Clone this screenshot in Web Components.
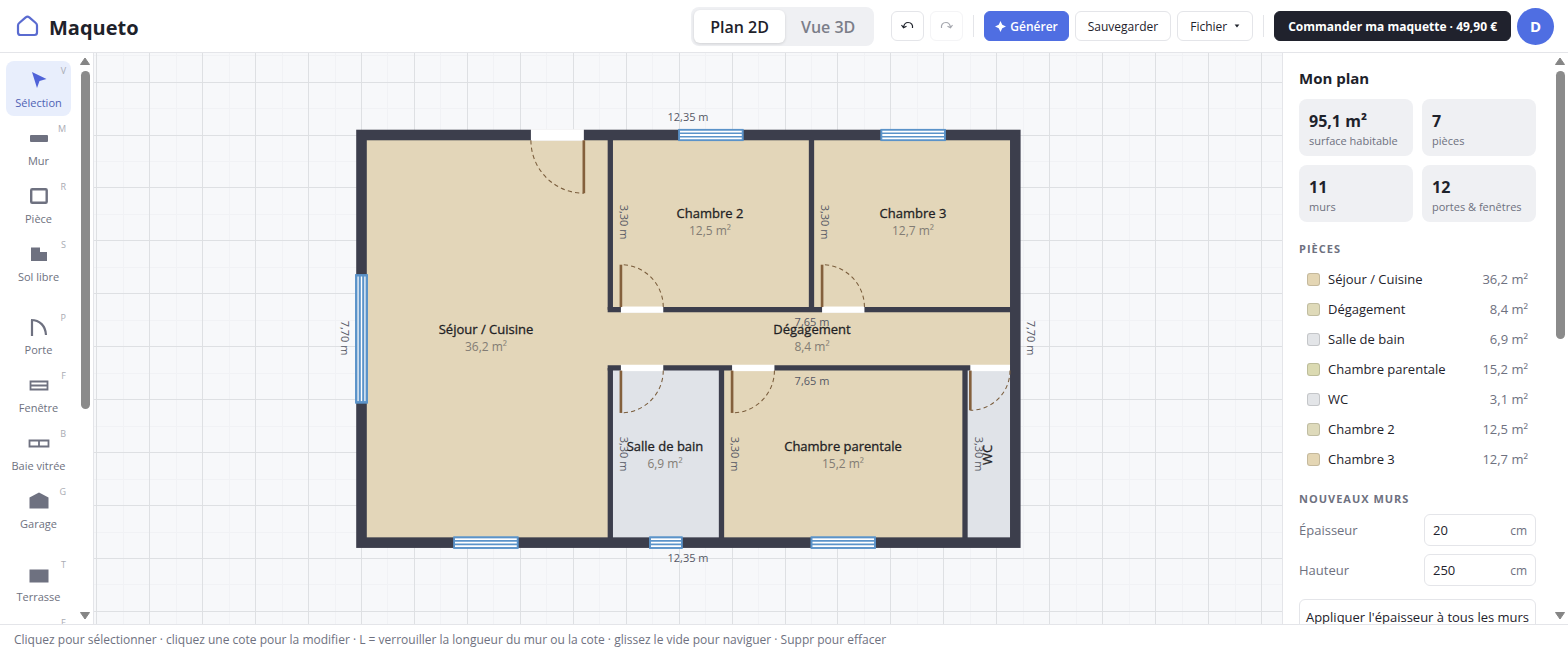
<!DOCTYPE html>
<html lang="fr">
<head>
<meta charset="utf-8">
<title>Maqueto</title>
<style>
  :root {
    --ink: #1e222b; --muted: #6e7180; --line: #e4e5e9; --soft: #eff0f3;
    --accent: #4f6ee2; --wall: #3c3e4c;
  }
  html, body { height: 100%; margin: 0; }
  body { font-family: "Open Sans", "Noto Sans", sans-serif; font-size: 12px; color: var(--ink); background: #fff; }
</style>
</head>
<body>
<maqueto-app></maqueto-app>
<script>
function define(name, html, setup) {
  customElements.define(name, class extends HTMLElement {
    constructor() {
      super();
      const t = document.createElement('template');
      t.innerHTML = html;
      this.attachShadow({ mode: 'open' }).append(t.content.cloneNode(true));
    }
    connectedCallback() { if (setup) setup(this, this.shadowRoot); }
  });
}

/* Scroll rail with arrows; --thumb is the share of the track covered */
define('scroll-rail', `
<style>
  :host { display: flex; flex-direction: column; align-items: center; width: 10px; padding: 4px 0 4px; box-sizing: border-box; }
  svg { display: block; width: 10px; height: 8px; fill: #858585; flex: none; }
  .track { flex: 1; width: 9px; margin: 6px 0 5px; }
  .thumb { height: var(--thumb); border-radius: 5px; background: #8b8b8b; }
</style>
<svg viewBox="0 0 10 8"><path d="M5 1 9.500 7.500H.5z" stroke="#858585" stroke-linejoin="round"/></svg>
<div class="track"><div class="thumb"></div></div>
<svg viewBox="0 0 10 8"><path d="M5 7 9.500.5H.5z" stroke="#858585" stroke-linejoin="round"/></svg>`);

/* Header */
define('app-header', `
<style>
  :host { display: flex; align-items: center; height: 52px; border-bottom: 1px solid var(--line); padding: 0 14px 0 16px; background: #fff; }
  .brand { display: flex; align-items: center; gap: 10px; font-size: 20px; font-weight: 700; margin-right: auto; }
  .brand svg { width: 23px; height: 22px; }
  .brand span { padding-top: 2px; }
  .actions { display: flex; align-items: center; gap: 6px; }
  button { font: inherit; color: inherit; box-sizing: border-box; cursor: pointer; white-space: nowrap; }
  .seg { display: flex; background: var(--soft); border-radius: 8px; padding: 3px; margin-right: 11px; }
  .seg button { border: 0; background: none; height: 33px; padding: 2px 16px 0; font-size: 16px; font-weight: 600; color: #7b7e89; border-radius: 6px; }
  .seg button[aria-pressed=true] { background: #fff; color: var(--ink); box-shadow: 0 1px 3px #0002; }
  .btn { height: 30px; border: 1px solid var(--line); background: #fff; border-radius: 6px; padding: 0 12px; font-size: 12px; display: flex; align-items: center; justify-content: center; gap: 4px; }
  .icon { width: 33px; padding: 0; }
  .icon:disabled { border-color: #f4f4f6; color: #a5a7ae; }
  .gen { background: var(--accent); border-color: var(--accent); color: #fff; font-weight: 600; padding: 0 10px; }
  .menu { gap: 7px; }
  .buy { background: #20222d; border-color: #20222d; color: #fff; font-weight: 700; padding: 0 13px; }
  .sep { width: 1px; height: 22px; background: var(--line); margin: 0 4px; }
  .avatar { width: 37px; height: 37px; border: 0; border-radius: 50%; background: var(--accent); color: #fff; font-weight: 700; font-size: 15px; padding: 0; }
</style>
<div class="brand">
  <svg viewBox="0 0 23 22" fill="none" stroke="#5a6bd0" stroke-width="2.200" stroke-linejoin="round"><path d="M2 10.500Q2 9 3.200 8L9.700 2.300Q11.500 1 13.300 2.300L19.800 8Q21 9 21 10.500V17.500Q21 20 18.500 20H4.500Q2 20 2 17.500Z"/></svg>
  <span>Maqueto</span>
</div>
<div class="actions">
  <div class="seg"><button aria-pressed="true">Plan 2D</button><button aria-pressed="false">Vue 3D</button></div>
  <button class="btn icon" aria-label="Annuler"><svg width="13" height="12" viewBox="0 0 13 12" fill="none" stroke="currentColor" stroke-width="1.200"><path d="M2.500 7.500C3 4 5 2.500 7 2.500c3.500 0 5 2.500 4.500 5.500M.5 5 2.500 7.800 5.500 6.300"/></svg></button>
  <button class="btn icon" disabled aria-label="Rétablir"><svg width="13" height="12" viewBox="0 0 13 12" fill="none" stroke="currentColor" stroke-width="1.200"><path d="M10.500 7.500C10 4 8 2.500 6 2.500c-3.500 0-5 2.500-4.500 5.500M12.500 5 10.500 7.800 7.500 6.300"/></svg></button>
  <span class="sep"></span>
  <button class="btn gen"><svg width="11" height="11" viewBox="0 0 10 10" fill="#fff"><path d="M5 0 6.600 3.400 10 5 6.600 6.600 5 10 3.400 6.600 0 5 3.400 3.400z"/></svg>Générer</button>
  <button class="btn">Sauvegarder</button>
  <button class="btn menu">Fichier <svg width="6" height="4" viewBox="0 0 7 5" fill="currentColor"><path d="M.5.500h6L3.500 4.500z"/></svg></button>
  <span class="sep"></span>
  <button class="btn buy">Commander ma maquette · 49,90 €</button>
  <button class="avatar" aria-label="Compte">D</button>
</div>`);

/* One tool of the left palette */
define('tool-button', `
<style>
  :host { display: block; }
  button { font: inherit; width: 100%; height: 55px; border: 0; border-radius: 8px; background: none; color: var(--muted); padding: 9px 0 0; position: relative; display: flex; flex-direction: column; align-items: center; gap: 5px; cursor: pointer; font-size: 11px; line-height: 16px; white-space: nowrap; }
  :host([selected]) button { background: #e8eefc; color: #4f62b4; }
  kbd { position: absolute; top: 2px; right: 5px; font: inherit; font-size: 9px; color: #a9abb3; }
  ::slotted(svg) { display: block; width: 22px; height: 20px; }
</style>
<button><slot name="icon"></slot><kbd></kbd><span></span></button>`,
(host, root) => {
  root.querySelector('kbd').textContent = host.getAttribute('key');
  root.querySelector('span').textContent = host.getAttribute('label');
});

const s = (d) => `<svg slot="icon" viewBox="0 0 22 20" fill="#6e7180">${d}</svg>`;
define('tool-palette', `
<style>
  :host { display: flex; justify-content: space-between; border-right: 1px solid var(--line); background: #fff; overflow: hidden; min-height: 0; padding: 0 3px 0 6px; }
  nav { width: 65px; display: flex; flex-direction: column; gap: 3px; padding-top: 8px; }
  .gap { height: 12px; flex: none; }
  scroll-rail { --thumb: 63%; }
</style>
<nav aria-label="Outils">
  <tool-button selected key="V" label="Sélection">${s('<path fill="#4f62d8" d="M4 2 18.500 9 11.500 11 9 18z"/>')}</tool-button>
  <tool-button key="M" label="Mur">${s('<rect x="2" y="7" width="18" height="7" rx="1"/>')}</tool-button>
  <tool-button key="R" label="Pièce">${s('<rect x="3.200" y="3.200" width="15.500" height="13.500" rx="1" fill="none" stroke="#6e7180" stroke-width="2.400"/>')}</tool-button>
  <tool-button key="S" label="Sol libre">${s('<path d="M3 3.500h9V8h7v9H3z"/>')}</tool-button>
  <div class="gap"></div>
  <tool-button key="P" label="Porte">${s('<path d="M4 19V3M3 3c9 0 14.500 6 15 15" fill="none" stroke="#6e7180" stroke-width="2.200"/>')}</tool-button>
  <tool-button key="F" label="Fenêtre">${s('<path d="M2.500 6.500h17v8h-17zM2.500 10.500h17" fill="none" stroke="#6e7180" stroke-width="1.800"/>')}</tool-button>
  <tool-button key="B" label="Baie vitrée">${s('<path d="M1.500 7.500h19v6h-19zM11 7.500v6" fill="none" stroke="#6e7180" stroke-width="1.800"/>')}</tool-button>
  <tool-button key="G" label="Garage">${s('<path d="M1.500 6.500 11 1.500l9.500 5v11h-19z"/>')}</tool-button>
  <div class="gap"></div>
  <tool-button key="T" label="Terrasse">${s('<rect x="1.500" y="5.500" width="19" height="13"/>')}</tool-button>
  <tool-button key="E" label="Escalier">${s('<path d="M2 17v-4h5V9h5V5h7v12z"/>')}</tool-button>
</nav>
<scroll-rail></scroll-rail>`);

/* Plan geometry is in centimetres, measured from the axis of the top-left corner */
const TAN = '#e3d6b9', GREY = '#e0e3e8';
const rooms = [[0,0,1235,770,TAN],[470,440,210,330,GREY],[1140,440,95,330,GREY]];
const walls = [[470,0,470,330],[850,0,850,330],[465,330,1235,330],[465,440,1235,440],[470,440,470,770],[680,440,680,770],[1140,440,1140,770]];
const windows = [[600,0,120],[982,0,120],[175,770,120],[545,770,60],[850,770,120]];
/* opening x, y, width, wall thickness, hinge side, swing direction */
const doors = [[320,0,100,20,'r',1],[490,330,80,10,'l',-1],[870,330,80,10,'l',-1],[490,440,80,10,'l',1],[700,440,80,10,'l',1],[1150,440,75,10,'l',1]];
const pane = (w) => `<rect y="-10" width="${w}" height="20" fill="#fff"/><path d="M0-10H${w}V10H0ZM0-3.300H${w}M0 3.300H${w}"/>`;
const gridLines = (offset) => {
  let d = '';
  for (let i = -30; i <= 42; i++) d += `M${i * 100 + offset}-3000V4200M-3000 ${i * 100 + offset}H4200`;
  return d;
};
const plan = [
  ...rooms.map(([x,y,w,h,f]) => `<rect x="${x}" y="${y}" width="${w}" height="${h}" fill="${f}"/>`),
  '<g stroke="var(--wall)" fill="none">',
  ...walls.map(([a,b,c,d]) => `<path stroke-width="10" d="M${a} ${b}L${c} ${d}"/>`),
  '<rect width="1235" height="770" stroke-width="20"/></g>',
  ...doors.map(([x,y,w,t,side,dir]) => {
    const hinge = side === 'r' ? x + w : x, open = side === 'r' ? x : x + w;
    const y0 = y + dir * t / 2, y1 = y0 + dir * w;
    const sweep = (side === 'l') === (dir === 1) ? 1 : 0;
    return `<rect x="${x}" y="${y - t / 2 - 1}" width="${w}" height="${t + 2}" fill="#fff"/>
      <path d="M${open} ${y0}A${w} ${w} 0 0 ${sweep} ${hinge} ${y1}" fill="none" stroke="#7a5d3c" stroke-width="2" stroke-dasharray="8 6"/>
      <path d="M${hinge} ${y0}V${y1}" stroke="#84603c" stroke-width="5"/>`;
  }),
  '<g stroke="#5b93c9" stroke-width="3" fill="none">',
  ...windows.map(([x,y,w]) => `<g transform="translate(${x} ${y})">${pane(w)}</g>`),
  `<g transform="translate(0 265) rotate(90)" stroke-width="4">${pane(240)}</g></g>`
].join('');
const names = [[392,281,'Séjour / Cuisine','36,2 m²'],[616,165,'Chambre 2','12,5 m²'],[819,165,'Chambre 3','12,7 m²'],[718,281,'Dégagement','8,4 m²'],[571,398,'Salle de bain','6,9 m²'],[749,398,'Chambre parentale','15,2 m²']];
const dims = [[594,64,'12,35 m'],[594,505,'12,35 m'],[251,285,'7,70 m',1],[937,285,'7,70 m',1],[718,269,'7,65 m'],[718,328,'7,65 m'],[530,169,'3,30 m',1],[731,169,'3,30 m',1],[530,401,'3,30 m',1],[641,401,'3,30 m',1],[885,401,'3,30 m',1]];
define('floor-plan', `
<style>
  :host { display: block; overflow: hidden; background: #f7f8fa; min-width: 0; min-height: 0; }
  svg { display: block; width: 100%; height: 100%; overflow: visible; }
  text { text-anchor: middle; font-size: 12px; }
  .name { font-size: 13px; fill: #1f1f25; stroke: #1f1f25; }
  .area { fill: #827c74; }
  .dim { font-size: 11px; fill: #555764; }
</style>
<svg viewBox="0 0 1188 571" role="img" aria-label="Plan du logement">
  <g transform="translate(267.500 82) scale(.5294)">
    <g fill="none" stroke-width="1.800" shape-rendering="crispEdges">
      <path stroke="#f0f1f4" d="${gridLines(50)}"/>
      <path stroke="#dcdee2" d="${gridLines(0)}"/>
    </g>
    ${plan}
  </g>
  ${dims.map(([x,y,t,r]) => `<text class="dim" ${r ? `transform="translate(${x} ${y}) rotate(90)" dy="4"` : `x="${x}" y="${y}" dy="4"`}>${t}</text>`).join('')}
  <g stroke-width=".3">
  ${names.map(([x,y,n]) => `<text class="name" x="${x}" y="${y}">${n}</text>`).join('')}
  <text class="name" transform="translate(898 402) rotate(-90)">WC</text>
  </g>
  ${names.map(([x,y,,a]) => `<text class="area" x="${x}" y="${y + 17}">${a}</text>`).join('')}
</svg>`);

/* Right panel parts */
define('stat-card', `
<style>
  :host { display: block; background: var(--soft); border-radius: 8px; padding: 11px 10px 9px; height: 37px; }
  b { display: block; font-size: 16px; line-height: 22px; }
  slot:not([name]) { display: block; font-size: 11px; line-height: 18px; color: var(--muted); }
</style>
<b><slot name="value"></slot></b><slot></slot>`);

define('room-row', `
<style>
  :host { display: flex; align-items: center; height: 30px; padding: 0 8px; font-size: 13px; }
  i { width: 13px; height: 13px; box-sizing: border-box; border: 1px solid #0002; border-radius: 3px; background: var(--c); margin-right: 8px; }
  .area { margin-left: auto; color: var(--muted); }
</style>
<i></i><slot></slot><span class="area"><slot name="area"></slot></span>`);

define('measure-field', `
<style>
  :host { display: flex; align-items: center; justify-content: space-between; height: 32px; margin-bottom: 8px; }
  label { color: var(--muted); font-size: 13px; }
  .box { display: flex; align-items: center; width: 112px; height: 32px; box-sizing: border-box; border: 1px solid var(--line); border-radius: 6px; padding: 0 8px; }
  input { flex: 1; min-width: 0; width: 0; border: 0; padding: 0; outline: 0; font: inherit; font-size: 13px; color: inherit; background: none; }
  .unit { font-size: 12px; color: var(--muted); }
</style>
<label for="f"><slot></slot></label><div class="box"><input id="f" inputmode="numeric"><span class="unit">cm</span></div>`,
(host, root) => { root.querySelector('input').value = host.getAttribute('value'); });

const list = [['Séjour / Cuisine','36,2 m²','#e4d6b4'],['Dégagement','8,4 m²','#dfdab9'],['Salle de bain','6,9 m²','#e3e5e8'],['Chambre parentale','15,2 m²','#dbdab2'],['WC','3,1 m²','#e3e5e8'],['Chambre 2','12,5 m²','#dedabb'],['Chambre 3','12,7 m²','#e4d6b4']];
define('plan-panel', `
<style>
  :host { display: flex; border-left: 1px solid var(--line); background: #fff; overflow: hidden; min-height: 0; padding: 0 3px 0 16px; justify-content: space-between; }
  .body { width: 237px; }
  h2 { margin: 15px 0 11px; font-size: 15px; line-height: 20px; }
  .stats { display: grid; grid-template-columns: 1fr 1fr; gap: 9px; }
  h3 { margin: 18px 0 6px; font-size: 11px; line-height: 18px; color: var(--muted); font-weight: 700; letter-spacing: 1px; text-transform: uppercase; }
  .list { margin-bottom: 16px; }
  .list + h3 { margin-top: 0; }
  .apply { font: inherit; font-size: 13px; width: 100%; height: 36px; margin-top: 5px; border: 1px solid var(--line); border-radius: 6px; background: #fff; color: inherit; padding: 0; white-space: nowrap; }
  scroll-rail { --thumb: 50%; }
</style>
<div class="body">
  <h2>Mon plan</h2>
  <div class="stats">
    <stat-card><span slot="value">95,1 m²</span>surface habitable</stat-card>
    <stat-card><span slot="value">7</span>pièces</stat-card>
    <stat-card><span slot="value">11</span>murs</stat-card>
    <stat-card><span slot="value">12</span>portes &amp; fenêtres</stat-card>
  </div>
  <h3>Pièces</h3>
  <div class="list">${list.map(([n,a,c]) => `<room-row style="--c:${c}">${n}<span slot="area">${a}</span></room-row>`).join('')}</div>
  <h3>Nouveaux murs</h3>
  <measure-field value="20">Épaisseur</measure-field>
  <measure-field value="250">Hauteur</measure-field>
  <button class="apply">Appliquer l'épaisseur à tous les murs</button>
</div>
<scroll-rail></scroll-rail>`);

define('status-bar', `
<style>
  :host { display: flex; align-items: center; height: 25px; border-top: 1px solid var(--line); padding: 2px 14px 0; color: var(--muted); background: #fff; font-size: 12px; white-space: nowrap; }
</style>
<slot></slot>`);

define('maqueto-app', `
<style>
  :host { display: flex; flex-direction: column; height: 100vh; overflow: hidden; }
  main { flex: 1; min-height: 0; display: grid; grid-template-columns: 94px minmax(0, 1fr) 286px; grid-template-rows: minmax(0, 1fr); }
  app-header, status-bar { flex: none; }
</style>
<app-header></app-header>
<main><tool-palette></tool-palette><floor-plan></floor-plan><plan-panel></plan-panel></main>
<status-bar>Cliquez pour sélectionner · cliquez une cote pour la modifier · L = verrouiller la longueur du mur ou la cote · glissez le vide pour naviguer · Suppr pour effacer</status-bar>`);
</script>
</body>
</html>
